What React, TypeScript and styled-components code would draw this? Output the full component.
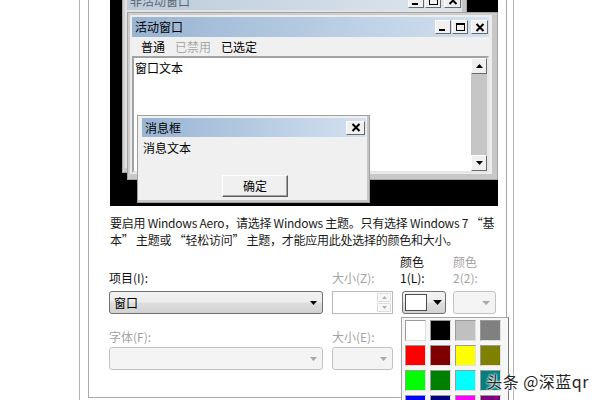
import React from 'react';
import styled, { createGlobalStyle } from 'styled-components';

const GlobalStyle = createGlobalStyle`
  html, body { margin: 0; padding: 0; background: #fff; }
  body { font-family: "Noto Sans CJK SC", "Noto Sans", sans-serif; }
  * { box-sizing: border-box; }
`;

const Page = styled.div`
  position: relative;
  width: 600px;
  height: 400px;
  overflow: hidden;
  background: #fff;
  display: flex;
`;

const Outer = styled.div`
  margin-left: 79px;
  width: 435px;
  height: 400px;
  border-left: 1px solid #b4b4b4;
  border-right: 1px solid #b4b4b4;
  padding: 0 6px 0 8px;
`;

const Inner = styled.div`
  width: 419px;
  height: 398px;
  border: 1px solid #a9a9a9;
  border-top: none;
  background: #fff;
  padding: 0 8px 0 21px;
  display: flex;
  flex-direction: column;
`;

const Preview = styled.div`
  position: relative;
  flex-shrink: 0;
  height: 206px;
  background: #000;
  overflow: hidden;
  font-size: 12px;
  line-height: 16px;
`;

const InactiveWin = styled.div`
  position: absolute;
  left: 12px;
  top: -14px;
  width: 345px;
  height: 187px;
  border: 1px solid #a8a8a8;
  background: #e2e2e2;
  padding: 4px;
  box-shadow: inset 2px 2px 0 #d0d0d0, inset -4px -4px 0 #c6c6c6;
`;

const ActiveWin = styled.div`
  position: absolute;
  left: 17px;
  top: 12px;
  width: 371px;
  height: 168px;
  border: 1px solid #a4a4a4;
  background: #ededed;
  padding: 4px 8px 6px 4px;
  box-shadow: inset 2px 2px 0 #cdcdcd, inset -5px -5px 0 #c8c8c8;
  display: flex;
  flex-direction: column;
`;

const TitleBar = styled.div<{ $inactive?: boolean; $h?: number }>`
  height: ${(p) => p.$h ?? 20}px;
  flex-shrink: 0;
  display: flex;
  align-items: center;
  padding-left: 3px;
  padding-right: 1px;
  color: ${(p) => (p.$inactive ? '#5b6670' : '#000')};
  background: ${(p) =>
    p.$inactive
      ? 'linear-gradient(to right, #bccbda, #dde6ef)'
      : 'linear-gradient(to right, #98b4d3, #d3e1f0)'};
`;

const TitleText = styled.span`
  flex: 1;
  white-space: nowrap;
`;

const CaptionGroup = styled.div`
  display: flex;
  gap: 1px;
`;

const CaptionBtn = styled.div<{ $w?: number }>`
  width: ${(p) => p.$w ?? 16}px;
  height: 14px;
  background: #f0f0f0;
  border: 1px solid;
  border-color: #ffffff #6a6a6a #6a6a6a #ffffff;
  display: flex;
  align-items: center;
  justify-content: center;
  &:last-child {
    margin-left: 2px;
  }
`;

const Menu = styled.div`
  height: 19px;
  flex-shrink: 0;
  display: flex;
  align-items: center;
  gap: 10px;
  padding-left: 9px;
  background: #f0f0f0;
`;

const MenuItem = styled.span<{ $disabled?: boolean }>`
  color: ${(p) => (p.$disabled ? '#a8a8a8' : '#000')};
`;

const TextArea = styled.div`
  flex: 1;
  display: flex;
  background: #fff;
  border: 2px solid;
  border-color: #a3a3a3 #e6e6e6 #e6e6e6 #a3a3a3;
`;

const TextBody = styled.div`
  flex: 1;
  padding: 2px 1px;
`;

const ScrollBar = styled.div`
  width: 16px;
  display: flex;
  flex-direction: column;
  background: #c6c6c6;
`;

const ScrollBtn = styled.div`
  width: 16px;
  height: 16px;
  background: #f0f0f0;
  border: 1px solid;
  border-color: #ffffff #6a6a6a #6a6a6a #ffffff;
  display: flex;
  align-items: center;
  justify-content: center;
`;

const ScrollTrack = styled.div`
  flex: 1;
`;

const MsgBox = styled.div`
  position: absolute;
  left: 27px;
  top: 115px;
  width: 233px;
  height: 88px;
  border: 1px solid #a0a0a0;
  background: #f0f0f0;
  padding: 2px 3px 5px 4px;
  box-shadow: inset -2px -2px 0 #c6c6c6;
  display: flex;
  flex-direction: column;
`;

const MsgText = styled.div`
  margin-top: 3px;
  padding-left: 1px;
`;

const OkButton = styled.div`
  margin: auto auto 0;
  width: 66px;
  height: 22px;
  background: #f0f0f0;
  border: 1px solid;
  border-color: #ffffff #5f5f5f #5f5f5f #ffffff;
  box-shadow: inset -1px -1px 0 #a0a0a0;
  display: flex;
  align-items: center;
  justify-content: center;
  transform: translateX(1px);
`;

const Paragraph = styled.p`
  margin: 8px 0 0;
  font-size: 12px;
  line-height: 17px;
  letter-spacing: -0.25px;
  color: #1a1a1a;
  white-space: nowrap;
`;

const Form = styled.div`
  margin: 6px 0 0 -1px;
  display: grid;
  grid-template-columns: 214px 61px 42px 43px;
  grid-template-rows: 37px 23px 33px 23px;
  column-gap: 9px;
  font-size: 12px;
  line-height: 16px;
`;

const Label = styled.div<{ $disabled?: boolean; $pb?: number; $ml?: number }>`
  align-self: end;
  padding-bottom: ${(p) => p.$pb ?? 5}px;
  margin-left: ${(p) => p.$ml ?? 0}px;
  color: ${(p) => (p.$disabled ? '#a3a3a3' : '#111')};
  white-space: nowrap;
`;

const Combo = styled.div<{ $disabled?: boolean }>`
  display: flex;
  align-items: center;
  border: 1px solid ${(p) => (p.$disabled ? '#c2c2c2' : '#707070')};
  border-radius: 3px;
  background: ${(p) =>
    p.$disabled
      ? '#f4f4f4'
      : 'linear-gradient(#f3f3f3 0%, #ececec 48%, #dedede 52%, #d2d2d2 100%)'};
  padding: 0 5px 0 4px;
`;

const DisabledCombo = styled(Combo).attrs({ $disabled: true })`
  justify-content: flex-end;
`;

const ComboText = styled.span`
  flex: 1;
  color: #000;
`;

const Spinner = styled.div`
  display: flex;
  justify-content: flex-end;
  border: 1px solid #b5b8bd;
  background: #fff;
  padding: 1px;
`;

const SpinCol = styled.div`
  width: 14px;
  display: flex;
  flex-direction: column;
  gap: 1px;
`;

const SpinBtn = styled.div`
  flex: 1;
  border: 1px solid #dcdcdc;
  border-radius: 1px;
  background: #f7f7f7;
  display: flex;
  align-items: center;
  justify-content: center;
`;

const ColorCell = styled.div`
  position: relative;
  display: flex;
`;

const ColorButton = styled(Combo)`
  flex: 1;
  padding: 0 3px 0 2px;
  gap: 6px;
`;

const ColorChip = styled.div`
  width: 22px;
  height: 17px;
  background: #fff;
  border: 1px solid #4a4a4a;
`;

const Palette = styled.div`
  position: absolute;
  left: -1px;
  top: calc(100% + 3px);
  width: 108px;
  border: 1px solid #a6a6a6;
  border-right-color: #777;
  background: #f6f6f6;
  padding: 2px 6px 2px 3px;
  display: grid;
  grid-template-columns: repeat(4, 21px);
  grid-auto-rows: 21px;
  gap: 4px;
  z-index: 2;
`;

const Swatch = styled.div<{ $c: string }>`
  background: ${(p) => p.$c};
  border: 1px solid #9a9a9a;
  border-right-color: #e0e0e0;
  border-bottom-color: #e0e0e0;
`;

const Watermark = styled.div`
  position: absolute;
  right: 11px;
  top: 372px;
  font-size: 16px;
  line-height: 19px;
  letter-spacing: 0.5px;
  color: #262626;
  white-space: nowrap;
  text-shadow: 0 0 2px #fff, 0 0 2px #fff, 0 0 3px #fff;
  z-index: 3;
`;

const Arrow = ({ color = '#000', w = 7, h = 4, up = false }: { color?: string; w?: number; h?: number; up?: boolean }) => (
  <svg width={w} height={h} viewBox={`0 0 ${w} ${h}`}>
    {up ? (
      <polygon points={`0,${h} ${w},${h} ${w / 2},0`} fill={color} />
    ) : (
      <polygon points={`0,0 ${w},0 ${w / 2},${h}`} fill={color} />
    )}
  </svg>
);

const MinIcon = () => (
  <svg width="10" height="10" viewBox="0 0 10 10">
    <rect x="1" y="7" width="6" height="2" fill="#000" />
  </svg>
);
const MaxIcon = () => (
  <svg width="11" height="10" viewBox="0 0 11 10">
    <rect x="1.5" y="1.5" width="8" height="7" fill="none" stroke="#000" strokeWidth="1" />
    <rect x="1" y="1" width="9" height="2" fill="#000" />
  </svg>
);
const CloseIcon = () => (
  <svg width="10" height="9" viewBox="0 0 10 9">
    <path d="M1.5 1 L8.5 8 M8.5 1 L1.5 8" stroke="#000" strokeWidth="2" />
  </svg>
);

const palette = [
  '#ffffff', '#000000', '#c0c0c0', '#808080',
  '#ff0000', '#800000', '#ffff00', '#808000',
  '#00ff00', '#008000', '#00ffff', '#008080',
  '#0000ff', '#000080', '#ff00ff', '#800080',
];

export default function App() {
  return (
    <>
      <GlobalStyle />
      <Page>
        <Outer>
          <Inner>
            <Preview>
              <InactiveWin>
                <TitleBar $inactive $h={19}>
                  <TitleText>非活动窗口</TitleText>
                  <CaptionGroup>
                    <CaptionBtn><MinIcon /></CaptionBtn>
                    <CaptionBtn><MaxIcon /></CaptionBtn>
                    <CaptionBtn $w={17}><CloseIcon /></CaptionBtn>
                  </CaptionGroup>
                </TitleBar>
              </InactiveWin>
              <ActiveWin>
                <TitleBar>
                  <TitleText>活动窗口</TitleText>
                  <CaptionGroup>
                    <CaptionBtn><MinIcon /></CaptionBtn>
                    <CaptionBtn><MaxIcon /></CaptionBtn>
                    <CaptionBtn $w={17}><CloseIcon /></CaptionBtn>
                  </CaptionGroup>
                </TitleBar>
                <Menu>
                  <MenuItem>普通</MenuItem>
                  <MenuItem $disabled>已禁用</MenuItem>
                  <MenuItem>已选定</MenuItem>
                </Menu>
                <TextArea>
                  <TextBody>窗口文本</TextBody>
                  <ScrollBar>
                    <ScrollBtn><Arrow up w={7} h={4} /></ScrollBtn>
                    <ScrollTrack />
                    <ScrollBtn><Arrow w={7} h={4} /></ScrollBtn>
                  </ScrollBar>
                </TextArea>
              </ActiveWin>
              <MsgBox>
                <TitleBar $h={19}>
                  <TitleText>消息框</TitleText>
                  <CaptionBtn $w={19}><CloseIcon /></CaptionBtn>
                </TitleBar>
                <MsgText>消息文本</MsgText>
                <OkButton>确定</OkButton>
              </MsgBox>
            </Preview>

            <Paragraph>
              要启用 Windows Aero，请选择 Windows 主题。只有选择 Windows 7 “基
              <br />
              本” 主题或 “轻松访问” 主题，才能应用此处选择的颜色和大小。
            </Paragraph>

            <Form>
              <Label>项目(I):</Label>
              <Label $disabled>大小(Z):</Label>
              <Label $ml={-2}>颜色<br />1(L):</Label>
              <Label $disabled>颜色<br />2(2):</Label>

              <Combo>
                <ComboText>窗口</ComboText>
                <Arrow w={7} h={4} />
              </Combo>
              <Spinner>
                <SpinCol>
                  <SpinBtn><Arrow up color="#b0b0b0" w={5} h={3} /></SpinBtn>
                  <SpinBtn><Arrow color="#b0b0b0" w={5} h={3} /></SpinBtn>
                </SpinCol>
              </Spinner>
              <ColorCell>
                <ColorButton>
                  <ColorChip />
                  <Arrow w={9} h={5} />
                </ColorButton>
                <Palette>
                  {palette.map((c) => (
                    <Swatch key={c} $c={c} />
                  ))}
                </Palette>
              </ColorCell>
              <DisabledCombo>
                <Arrow color="#a8a8a8" w={8} h={4} />
              </DisabledCombo>

              <Label $disabled $pb={2}>字体(F):</Label>
              <Label $disabled $pb={2}>大小(E):</Label>
              <div />
              <div />

              <DisabledCombo>
                <Arrow color="#a8a8a8" w={7} h={4} />
              </DisabledCombo>
              <DisabledCombo>
                <Arrow color="#a8a8a8" w={7} h={4} />
              </DisabledCombo>
            </Form>
          </Inner>
        </Outer>
        <Watermark>头条 @深蓝qr</Watermark>
      </Page>
    </>
  );
}
